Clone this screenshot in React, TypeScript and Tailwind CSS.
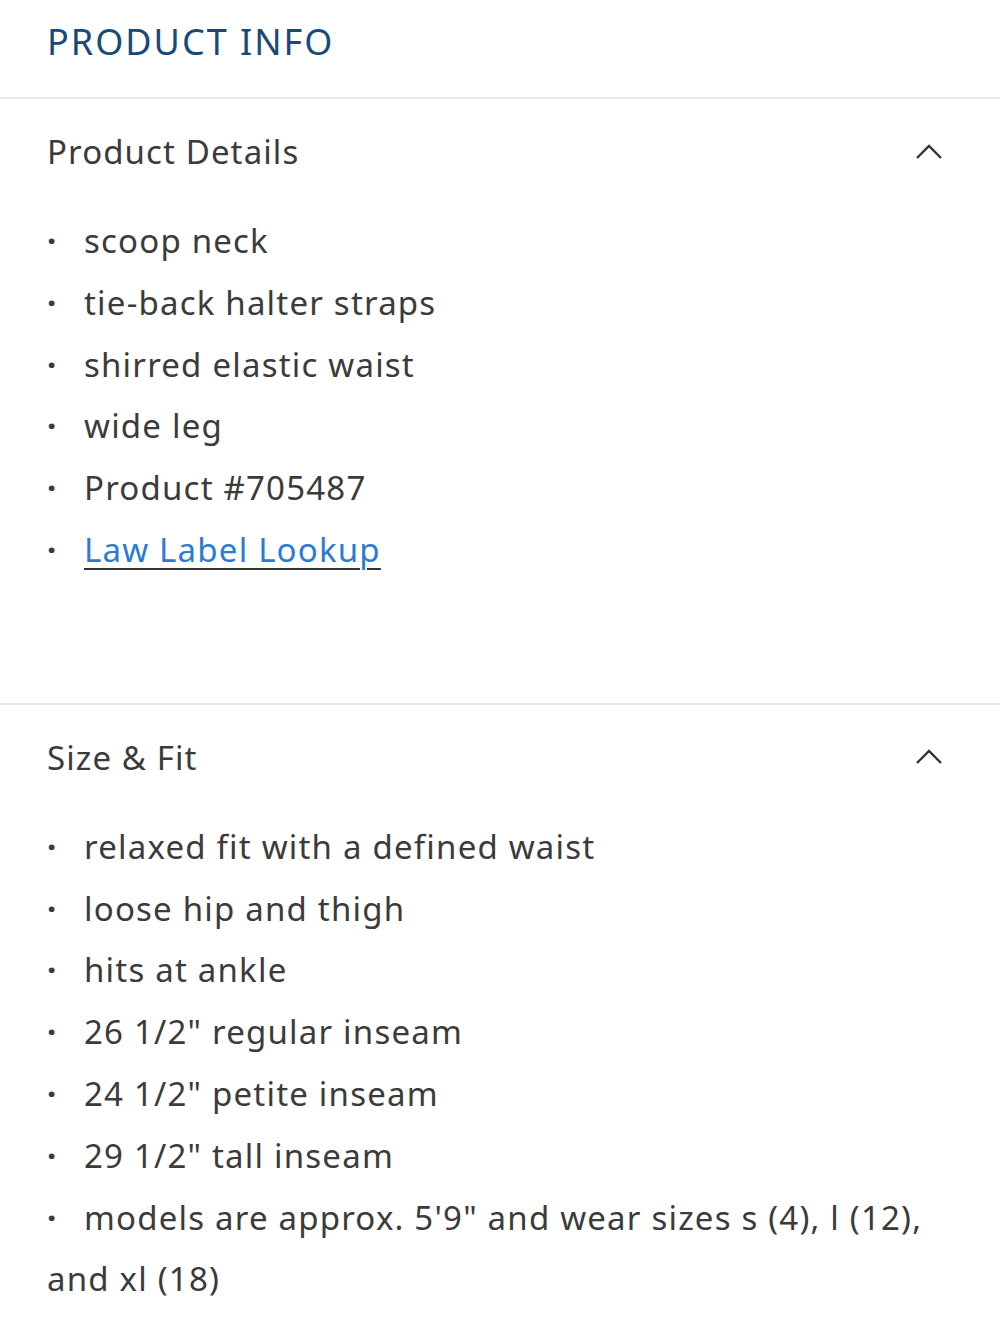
import React from 'react';

type Item = { text: string; href?: string };

const details: Item[] = [
  { text: 'scoop neck' },
  { text: 'tie-back halter straps' },
  { text: 'shirred elastic waist' },
  { text: 'wide leg' },
  { text: 'Product #705487' },
  { text: 'Law Label Lookup', href: '#' },
];

const sizeFit: Item[] = [
  { text: 'relaxed fit with a defined waist' },
  { text: 'loose hip and thigh' },
  { text: 'hits at ankle' },
  { text: '26 1/2" regular inseam' },
  { text: '24 1/2" petite inseam' },
  { text: '29 1/2" tall inseam' },
  { text: 'models are approx. 5\'9" and wear sizes s (4), l (12), and xl (18)' },
];

const ChevronUp = () => (
  <svg width="28" height="16" viewBox="0 0 28 16" fill="none" className="text-[#333]">
    <polyline points="2,14 14,2 26,14" stroke="currentColor" strokeWidth="2.4" />
  </svg>
);

function Section({ title, items, pb }: { title: string; items: Item[]; pb: string }) {
  return (
    <section className={`border-t-2 border-[#ebebeb] ${pb}`}>
      <div className="h-[105px] flex items-center justify-between pl-[47px] pr-[57px]">
        <h3 className="text-[33px] tracking-[1.1px] text-[#3b3b3b]">{title}</h3>
        <ChevronUp />
      </div>
      <ul className="pl-[47px] pr-[50px] pt-[6px] text-[33px] tracking-[1.2px] leading-[61.8px] text-[#3b3b3b]">
        {items.map((item, i) => (
          <li key={i}>
            <span className="inline-block w-[37px] font-bold">·</span>
            {item.href ? (
              <a
                href={item.href}
                className="text-[#2b7bd4] underline decoration-[#333] decoration-2 underline-offset-[6px]"
              >
                {item.text}
              </a>
            ) : (
              item.text
            )}
          </li>
        ))}
      </ul>
    </section>
  );
}

export default function App() {
  return (
    <div className="w-[1000px] min-h-[1333px] bg-white font-['Noto_Sans',sans-serif]">
      <div className="h-[97px] flex items-center pl-[47px] pb-[14px]">
        <h2 className="text-[36px] tracking-[2px] text-[#174a78]">PRODUCT INFO</h2>
      </div>
      <Section title="Product Details" items={details} pb="pb-[122px]" />
      <Section title="Size & Fit" items={sizeFit} pb="pb-[30px]" />
    </div>
  );
}
